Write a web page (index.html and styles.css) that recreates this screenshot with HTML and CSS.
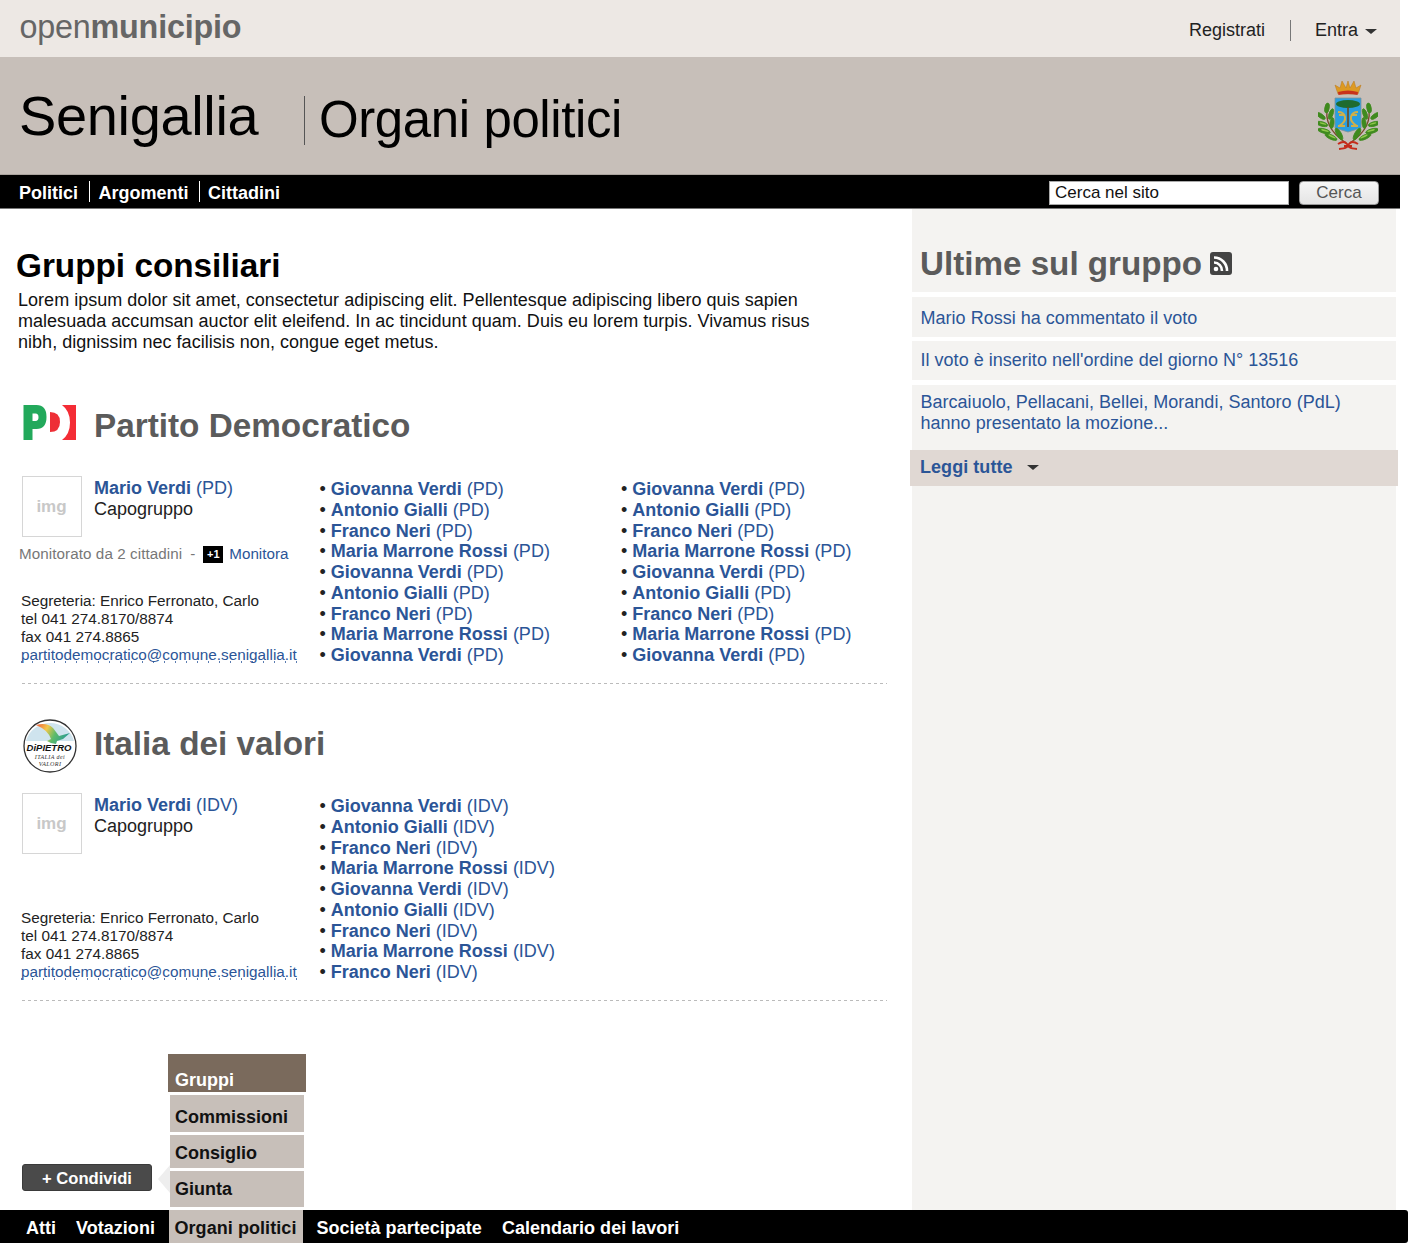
FILE: index.html
```html
<!DOCTYPE html>
<html lang="it">
<head>
<meta charset="utf-8">
<title>Senigallia - Organi politici</title>
<link rel="stylesheet" href="styles.css">
</head>
<body>
<header class="site-header">
  <div class="topbar">
    <a class="brand">open<b>municipio</b></a>
    <div class="account">
      <a class="account-link">Registrati</a>
      <span class="account-sep"></span>
      <a class="account-link">Entra</a>
      <span class="caret caret-dark"></span>
    </div>
  </div>
  <div class="banner">
    <div class="city">Senigallia</div>
    <div class="page-title">Organi politici</div>
    <svg class="crest" width="60" height="71" viewBox="0 0 60 71">
      <path d="M17 5l5 3 2-7 4 7 2-7 2 7 4-7 2 7 5-3-3 9H20z" fill="#dd9a22" stroke="#b8761a" stroke-width=".5"/>
      <path d="M20 12q10-3 20 0l-.500 3q-9.500-2-19 0z" fill="#c8321c"/>
      <path d="M17 18h26v30l-13 4-13-4z" fill="#2a9ee0" stroke="#7f9298" stroke-width=".8"/>
      <ellipse cx="30" cy="24" rx="12" ry="4" fill="#1f6b30"/>
      <path d="M30 27v20" stroke="#6a4a20" stroke-width="1.600"/>
      <path d="M20 32q6 0 7 5t-6 9M40 32q-6 0-7 5t6 9M21 35h5M34 35h5M20 46h7M33 46h7" fill="none" stroke="#cfb04a" stroke-width="2"/>
      <path d="M10 25q-6 22 18 38" fill="none" stroke="#7a4a2c" stroke-width="1.400"/>
      <path d="M50 25q6 22-18 38" fill="none" stroke="#7a4a2c" stroke-width="1.400"/>
      <g fill="#3f8a1e" stroke="#3f8a1e" stroke-width=".8">
        <ellipse cx="9" cy="28" rx="2.200" ry="5" transform="rotate(10 9 28)"/>
        <ellipse cx="3" cy="36" rx="5" ry="2" transform="rotate(35 3 36)"/>
        <ellipse cx="13" cy="34" rx="2" ry="5.500" transform="rotate(20 13 34)"/>
        <ellipse cx="4" cy="44" rx="6" ry="2.200" transform="rotate(15 4 44)"/>
        <ellipse cx="6" cy="51" rx="6.500" ry="2.200" transform="rotate(15 6 51)"/>
        <ellipse cx="14" cy="43" rx="2" ry="5.500" transform="rotate(5 14 43)"/>
        <ellipse cx="13" cy="57" rx="6.500" ry="2.200" transform="rotate(25 13 57)"/>
        <ellipse cx="21" cy="54" rx="2.300" ry="6.500" transform="rotate(-30 21 54)"/>
        <ellipse cx="51" cy="28" rx="2.200" ry="5" transform="rotate(-10 51 28)"/>
        <ellipse cx="57" cy="36" rx="5" ry="2" transform="rotate(-35 57 36)"/>
        <ellipse cx="47" cy="34" rx="2" ry="5.500" transform="rotate(-20 47 34)"/>
        <ellipse cx="56" cy="44" rx="6" ry="2.200" transform="rotate(-15 56 44)"/>
        <ellipse cx="54" cy="51" rx="6.500" ry="2.200" transform="rotate(-15 54 51)"/>
        <ellipse cx="46" cy="43" rx="2" ry="5.500" transform="rotate(-5 46 43)"/>
        <ellipse cx="47" cy="57" rx="6.500" ry="2.200" transform="rotate(-25 47 57)"/>
        <ellipse cx="39" cy="54" rx="2.300" ry="6.500" transform="rotate(30 39 54)"/>
      </g>
      <g fill="#8fc84a">
        <ellipse cx="5" cy="43.500" rx="3.500" ry=".9" transform="rotate(15 5 43.500)"/>
        <ellipse cx="7" cy="50.500" rx="4" ry=".9" transform="rotate(15 7 50.500)"/>
        <ellipse cx="14" cy="56.500" rx="4" ry=".9" transform="rotate(25 14 56.500)"/>
        <ellipse cx="55" cy="43.500" rx="3.500" ry=".9" transform="rotate(-15 55 43.500)"/>
        <ellipse cx="53" cy="50.500" rx="4" ry=".9" transform="rotate(-15 53 50.500)"/>
        <ellipse cx="46" cy="56.500" rx="4" ry=".9" transform="rotate(-25 46 56.500)"/>
      </g>
      <path d="M20 64q6-4 9 0t-8 5M40 64q-6-4-9 0t8 5M26 66h8" fill="none" stroke="#c52b1a" stroke-width="2"/>
    </svg>
  </div>
  <nav class="mainnav">
    <a class="mainnav-item">Politici</a>
    <a class="mainnav-item">Argomenti</a>
    <a class="mainnav-item">Cittadini</a>
    <form class="search">
      <input class="search-input" type="text" value="Cerca nel sito">
      <button class="search-button" type="button">Cerca</button>
    </form>
  </nav>
</header>

<div class="layout">
  <main class="content">
    <h1 class="content-title">Gruppi consiliari</h1>
    <p class="intro">Lorem ipsum dolor sit amet, consectetur adipiscing elit. Pellentesque adipiscing libero quis sapien malesuada accumsan auctor elit eleifend. In ac tincidunt quam. Duis eu lorem turpis. Vivamus risus nibh, dignissim nec facilisis non, congue eget metus.</p>

    <section class="party party-pd">
      <div class="party-head">
        <svg class="party-logo" width="54" height="36" viewBox="0 0 54 36">
          <path fill-rule="evenodd" d="M.5 1h13q10 0 10 12t-10 12h-4v11h-9zM9.500 9.500v7.500h3q3 0 3-3.750t-3-3.750z" fill="#22a95b"/>
          <path d="M27 8q10 0 10 10t-10 10z" fill="#ee2f36"/>
          <path d="M39 1h14v35H39q8-6 8-17.500T39 1z" fill="#f42c35"/>
        </svg>
        <h2 class="party-name">Partito Democratico</h2>
      </div>
      <div class="party-body">
        <div class="leader">
          <div class="leader-card">
            <div class="avatar">img</div>
            <div class="leader-info">
              <a class="person"><b>Mario Verdi</b> (PD)</a>
              <div class="leader-role">Capogruppo</div>
            </div>
          </div>
          <div class="monitor">
            <span class="monitor-count">Monitorato da 2 cittadini</span><span class="monitor-dash">-</span>
            <span class="plus-one">+1</span><a class="monitor-link">Monitora</a>
          </div>
          <address class="contact">Segreteria: Enrico Ferronato, Carlo<br>tel 041 274.8170/8874<br>fax 041 274.8865<br><a class="contact-mail">partitodemocratico@comune.senigallia.it</a></address>
        </div>
        <ul class="members">
          <li>• <a class="person"><b>Giovanna Verdi</b> (PD)</a></li>
          <li>• <a class="person"><b>Antonio Gialli</b> (PD)</a></li>
          <li>• <a class="person"><b>Franco Neri</b> (PD)</a></li>
          <li>• <a class="person"><b>Maria Marrone Rossi</b> (PD)</a></li>
          <li>• <a class="person"><b>Giovanna Verdi</b> (PD)</a></li>
          <li>• <a class="person"><b>Antonio Gialli</b> (PD)</a></li>
          <li>• <a class="person"><b>Franco Neri</b> (PD)</a></li>
          <li>• <a class="person"><b>Maria Marrone Rossi</b> (PD)</a></li>
          <li>• <a class="person"><b>Giovanna Verdi</b> (PD)</a></li>
        </ul>
        <ul class="members">
          <li>• <a class="person"><b>Giovanna Verdi</b> (PD)</a></li>
          <li>• <a class="person"><b>Antonio Gialli</b> (PD)</a></li>
          <li>• <a class="person"><b>Franco Neri</b> (PD)</a></li>
          <li>• <a class="person"><b>Maria Marrone Rossi</b> (PD)</a></li>
          <li>• <a class="person"><b>Giovanna Verdi</b> (PD)</a></li>
          <li>• <a class="person"><b>Antonio Gialli</b> (PD)</a></li>
          <li>• <a class="person"><b>Franco Neri</b> (PD)</a></li>
          <li>• <a class="person"><b>Maria Marrone Rossi</b> (PD)</a></li>
          <li>• <a class="person"><b>Giovanna Verdi</b> (PD)</a></li>
        </ul>
      </div>
    </section>

    <section class="party party-idv">
      <div class="party-head">
        <svg class="party-logo" width="54" height="54" viewBox="0 0 54 54">
          <defs>
            <linearGradient id="idvsky" x1="0" y1="0" x2="1" y2=".3">
              <stop offset="0" stop-color="#ef5a3a"/><stop offset=".35" stop-color="#f2c74a"/><stop offset=".65" stop-color="#5dbb6a"/><stop offset="1" stop-color="#2f9f8f"/>
            </linearGradient>
          </defs>
          <circle cx="27" cy="27" r="26" fill="#fff" stroke="#333" stroke-width="1.300"/>
          <path d="M3 22A25 25 0 0 1 51 22z" fill="#cfe4ee"/>
          <path d="M13 6q11-3 17 3l6 8 11-3-7 6-6 2-1 3-5-1-4-2 4-2q-3-9-15-14z" fill="url(#idvsky)"/>
          <text class="idv-name" x="26" y="32">DiPIETRO</text>
          <text class="idv-sub" x="27" y="40">ITALIA dei</text>
          <text class="idv-sub" x="27" y="47">VALORI</text>
        </svg>
        <h2 class="party-name">Italia dei valori</h2>
      </div>
      <div class="party-body">
        <div class="leader">
          <div class="leader-card">
            <div class="avatar">img</div>
            <div class="leader-info">
              <a class="person"><b>Mario Verdi</b> (IDV)</a>
              <div class="leader-role">Capogruppo</div>
            </div>
          </div>
          <address class="contact">Segreteria: Enrico Ferronato, Carlo<br>tel 041 274.8170/8874<br>fax 041 274.8865<br><a class="contact-mail">partitodemocratico@comune.senigallia.it</a></address>
        </div>
        <ul class="members">
          <li>• <a class="person"><b>Giovanna Verdi</b> (IDV)</a></li>
          <li>• <a class="person"><b>Antonio Gialli</b> (IDV)</a></li>
          <li>• <a class="person"><b>Franco Neri</b> (IDV)</a></li>
          <li>• <a class="person"><b>Maria Marrone Rossi</b> (IDV)</a></li>
          <li>• <a class="person"><b>Giovanna Verdi</b> (IDV)</a></li>
          <li>• <a class="person"><b>Antonio Gialli</b> (IDV)</a></li>
          <li>• <a class="person"><b>Franco Neri</b> (IDV)</a></li>
          <li>• <a class="person"><b>Maria Marrone Rossi</b> (IDV)</a></li>
          <li>• <a class="person"><b>Franco Neri</b> (IDV)</a></li>
        </ul>
      </div>
    </section>

    <div class="content-foot">
      <button class="share" type="button">+ Condividi</button>
      <span class="share-tip"></span>
      <ul class="submenu">
        <li class="submenu-item submenu-active">Gruppi</li>
        <li class="submenu-item submenu-comm">Commissioni</li>
        <li class="submenu-item submenu-cons">Consiglio</li>
        <li class="submenu-item submenu-giun">Giunta</li>
      </ul>
    </div>
  </main>

  <aside class="sidebar">
    <div class="side-head">
      <h2 class="side-title">Ultime sul gruppo</h2>
      <svg class="rss" width="22" height="23" viewBox="0 0 22 23">
        <rect width="22" height="23" rx="3" fill="#444"/>
        <circle cx="6" cy="17" r="2.300" fill="#fff"/>
        <path d="M4 10.500a8 8 0 0 1 8 8.500M4 5.500a13 13 0 0 1 13 13.500" fill="none" stroke="#fff" stroke-width="2.600"/>
      </svg>
    </div>
    <a class="side-item side-item-1">Mario Rossi ha commentato il voto</a>
    <a class="side-item side-item-2">Il voto è inserito nell'ordine del giorno N° 13516</a>
    <a class="side-item side-item-3">Barcaiuolo, Pellacani, Bellei, Morandi, Santoro (PdL) hanno presentato la mozione...</a>
    <div class="side-more"><b>Leggi tutte</b><span class="caret caret-dark side-caret"></span></div>
  </aside>
</div>

<nav class="footnav">
  <a class="footnav-item">Atti</a>
  <a class="footnav-item">Votazioni</a>
  <a class="footnav-item footnav-active">Organi politici</a>
  <a class="footnav-item">Società partecipate</a>
  <a class="footnav-item">Calendario dei lavori</a>
</nav>
</body>
</html>
```

FILE: styles.css
```css
* { box-sizing: border-box; }
html, body { margin: 0; padding: 0; }
body {
  font-family: "Liberation Sans", Arial, sans-serif;
  font-size: 18px;
  color: #000;
  background: #fff;
  width: 1419px;
  overflow: hidden;
}
ul { list-style: none; margin: 0; padding: 0; }
address { font-style: normal; }

/* header */
.site-header { width: 1400px; }
.topbar {
  height: 57px;
  background: #ede8e4;
  display: flex;
  justify-content: space-between;
  padding: 8px 23px 0 19.500px;
}
.brand { font-size: 32.300px; line-height: 38px; color: #666; letter-spacing: -0.2px; }
.account { display: flex; align-items: center; height: 44px; font-size: 18px; color: #222; }
.account-sep { width: 1px; height: 21px; background: #777; margin: 0 24px 0 25px; }
.caret {
  display: inline-block;
  width: 0;
  height: 0;
  border-left: 6px solid transparent;
  border-right: 6px solid transparent;
  border-top: 5px solid #333;
}
.account .caret { margin: 3px 0 0 7px; }
.banner {
  height: 118px;
  background: #c7bfb9;
  display: flex;
  align-items: flex-start;
  padding: 0 22px 0 19px;
  border-bottom: 1px solid #aaa39d;
}
.city { font-size: 56px; line-height: 64px; margin-top: 27px; width: 285px; flex: none; letter-spacing: -0.35px; white-space: nowrap; }
.page-title {
  font-size: 51px;
  line-height: 47px;
  height: 49px;
  margin-top: 39px;
  padding-left: 14px;
  border-left: 1px solid #555;
  flex: 1;
  letter-spacing: -0.4px;
}
.crest { margin-top: 23px; flex: none; }
.mainnav {
  height: 34px;
  background: #000;
  display: flex;
  align-items: center;
  padding: 0 21px 0 0;
  border-bottom: 1px solid #777;
}
.mainnav-item {
  color: #fff;
  font-weight: bold;
  font-size: 18px;
  line-height: 21px;
  padding: 2px 10px 0 8.500px;
  height: 21px;
  border-left: 1px solid #fff;
}
.mainnav-item:first-child { border-left: 0; padding-left: 19px; padding-right: 11px; }
.search { margin: 2px 0 0 auto; display: flex; gap: 10px; padding-top: 1px; }
.search-input {
  width: 240px;
  height: 24px;
  border: 1px solid #aaa;
  background: #fff;
  font: 17px "Liberation Sans", Arial, sans-serif;
  color: #111;
  padding: 0 5px;
  margin: 0;
  border-radius: 0;
  outline: 0;
}
.search-button {
  width: 80px;
  height: 24px;
  border: 1px solid #999;
  border-radius: 4px;
  background: linear-gradient(#f6f6f6, #e4e4e4);
  font: 17px "Liberation Sans", Arial, sans-serif;
  color: #555;
  padding: 0;
}

/* layout */
.layout { display: flex; align-items: stretch; }
.content { width: 912px; flex: none; }
.content-title {
  font-size: 33.300px;
  line-height: 38px;
  margin: 38px 0 0 16px;
  font-weight: bold;
}
.intro { margin: 5px 0 0 18px; width: 800px; line-height: 21px; font-size: 18px; color: #111; letter-spacing: 0.025px; }

/* party */
.party {
  margin-left: 22px;
  width: 865px;
  background: repeating-linear-gradient(90deg, #bbb 0 3px, transparent 3px 6px) left bottom / 100% 1px no-repeat;
}
.party-pd { padding-top: 51px; height: 331px; }
.party-idv { padding-top: 35px; height: 317px; }
.party-head { display: flex; align-items: center; gap: 17px; }
.party-pd .party-head { height: 36px; margin-bottom: 36px; }
.party-idv .party-head { height: 54px; margin-bottom: 20px; }
.party-logo { flex: none; margin-left: 1px; }
.party-name { margin: 0; font-size: 33.300px; line-height: 38px; font-weight: bold; color: #5b5b5b; }
.party-pd .party-name { padding-top: 8px; }
.party-idv .party-name { margin-top: -4px; }
.party-body { display: grid; grid-template-columns: 297px 301.500px 264.500px; height: 190px; }
.leader { display: flex; flex-direction: column; }
.leader-card { display: flex; gap: 12px; }
.avatar {
  width: 60px;
  height: 61px;
  border: 1px solid #d6d6d6;
  background: #fff;
  color: #c8c8c8;
  font-weight: bold;
  font-size: 17px;
  display: flex;
  align-items: center;
  justify-content: center;
  padding: 1px 1px 0 0;
  flex: none;
}
.leader-info { line-height: 20.800px; padding-top: 2px; }
.person { color: #2b5597; }
.person b { font-weight: bold; }
.leader-role { color: #222; }
.monitor {
  display: flex;
  align-items: center;
  margin: 8px 0 0 -3px;
  font-size: 15.200px;
  line-height: 18px;
  color: #777;
  white-space: nowrap;
}
.monitor-count { letter-spacing: .08px; }
.monitor-dash { margin: 0 8px; }
.plus-one {
  width: 20px;
  height: 17px;
  background: #000;
  color: #fff;
  font-size: 11px;
  font-weight: bold;
  text-align: center;
  line-height: 17px;
  margin: 0 6px 0 0;
}
.monitor-link { color: #2b5597; }
.contact {
  margin-top: auto;
  margin-left: -1px;
  font-size: 15.300px;
  line-height: 18px;
  color: #222;
  white-space: nowrap;
  padding-bottom: 2px;
}
.contact-mail {
  color: #2b5597;
  background: repeating-linear-gradient(90deg, #5a7cb0 0 1px, transparent 1px 11px) left bottom / 100% 2px no-repeat;
}
.members { font-size: 18px; line-height: 20.750px; color: #222; white-space: nowrap; padding-left: .5px; padding-top: 3px; }

.idv-name { font: italic bold 9.500px "Liberation Sans", Arial, sans-serif; fill: #111; text-anchor: middle; }
.idv-sub { font: italic 6px "Liberation Serif", serif; fill: #333; text-anchor: middle; letter-spacing: .4px; }

/* foot of content */
.content-foot { display: flex; align-items: flex-end; margin-top: 53px; position: relative; }
.share {
  width: 130px;
  height: 27px;
  margin: 0 0 19px 22px;
  background: #4a4a4a;
  border: 1px solid #3a3a3a;
  border-radius: 3px;
  color: #fff;
  font: bold 16.600px "Liberation Sans", Arial, sans-serif;
  padding: 3px 0 0;
}
.share-tip {
  position: absolute;
  left: 158px;
  bottom: 17px;
  width: 12px;
  height: 28px;
  background: #eeeeee;
  clip-path: polygon(0 50%, 100% 0, 100% 100%);
}
.submenu { margin-left: 16px; width: 138px; font-weight: bold; line-height: 21px; color: #111; position: relative; }
.submenu-item { background: #c7bfb9; margin: 0 2px 3px; padding-left: 5px; }
.submenu-active {
  background: #7a6a5c;
  color: #fff;
  margin: 0 0 3px;
  height: 38px;
  padding: 16px 0 0 7px;
}
.submenu-comm { height: 37px; padding-top: 12px; }
.submenu-cons { height: 33px; padding-top: 8px; }
.submenu-giun { height: 36px; padding-top: 8px; }

/* sidebar */
.sidebar { width: 484px; flex: none; background: #f4f3f1; position: relative; }
.side-head {
  height: 83px;
  display: flex;
  align-items: flex-start;
  padding: 36px 0 0 8px;
}
.side-title { margin: 0; font-size: 33.200px; line-height: 38px; font-weight: bold; color: #5b5b5b; }
.rss { margin: 7px 0 0 8px; }
.side-item { display: block; color: #2b5597; line-height: 21px; padding: 0 50px 0 8.500px; letter-spacing: .02px; }
.side-item-1 { height: 40px; margin-top: 5px; padding-top: 11px; box-shadow: 0 -5px 0 #fff; }
.side-item-2 { height: 39px; margin-top: 4px; padding-top: 9px; box-shadow: 0 -4px 0 #fff; }
.side-item-3 { height: 65px; margin-top: 5px; padding-top: 7px; box-shadow: 0 -5px 0 #fff; }
.side-more {
  height: 36px;
  margin: 0 -2px;
  padding: 7px 0 0 10px;
  background: #e0d8d3;
  color: #2b5597;
  line-height: 21px;
  display: flex;
  align-items: flex-start;
  letter-spacing: .05px;
}
.side-caret { margin: 8px 0 0 14px; }

/* bottom navigation */
.footnav {
  width: 1408px;
  height: 33px;
  background: #000;
  border-radius: 0 3px 3px 0;
  display: flex;
  padding-left: 26px;
  font-weight: bold;
  line-height: 36px;
  color: #fff;
  letter-spacing: .02px;
}
.footnav-item { margin-right: 20px; white-space: nowrap; }
.footnav-active {
  background: #c7bfb9;
  color: #111;
  margin: 0 13.500px 0 -6px;
  width: 134px;
  padding-left: 5.500px;
  letter-spacing: .07px;
}
```
